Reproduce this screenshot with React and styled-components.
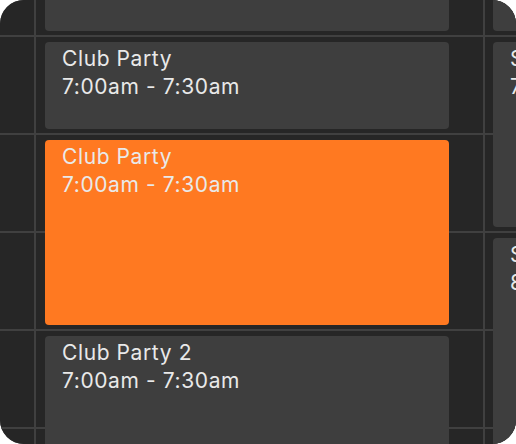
import React from 'react';
import styled, { createGlobalStyle } from 'styled-components';

const ROW = 98;
const LINE_Y = 35;

const GlobalStyle = createGlobalStyle`
  html, body {
    margin: 0;
    padding: 0;
    background: #ffffff;
  }
  body {
    font-family: Inter, "Noto Sans", sans-serif;
  }
`;

const Board = styled.div`
  width: 516px;
  height: 444px;
  border-radius: 24px;
  overflow: hidden;
  display: grid;
  grid-template-columns: 34px 447px 31px;
  column-gap: 2px;
  background: #404040;
`;

const Column = styled.div`
  position: relative;
  overflow: hidden;
  background-color: #262626;
  background-image: repeating-linear-gradient(
    to bottom,
    #404040 0,
    #404040 2px,
    transparent 2px,
    transparent ${ROW}px
  );
  background-position: 0 ${LINE_Y}px;
`;

// events sit on the time grid: top/height come from slot + span
const Event = styled.div`
  position: absolute;
  left: ${p => p.$left}px;
  width: ${p => p.$width ? `${p.$width}px` : 'auto'};
  right: ${p => p.$width ? 'auto' : '-20px'};
  top: ${p => LINE_Y + 2 + ROW * p.$slot + 5}px;
  height: ${p => ROW * p.$span - 11}px;
  box-sizing: border-box;
  padding: 3px 17px 0;
  border-radius: 4px;
  background: ${p => p.$active ? '#ff7921' : '#3e3e3e'};
  color: #e9e9e9;
  overflow: hidden;
  white-space: nowrap;
`;

const Line = styled.div`
  font-size: 21px;
  line-height: 28px;
  letter-spacing: 0.6px;
`;

const middle = [
  { slot: -1, span: 1 },
  { slot: 0, span: 1, title: 'Club Party', time: '7:00am - 7:30am' },
  { slot: 1, span: 2, title: 'Club Party', time: '7:00am - 7:30am', active: true },
  { slot: 3, span: 2, title: 'Club Party 2', time: '7:00am - 7:30am' },
];

const right = [
  { slot: -1, span: 1 },
  { slot: 0, span: 2, title: 'Soccer Practice', time: '7:00am - 8:00am' },
  { slot: 2, span: 3, title: 'Swim Class', time: '8:00am - 9:00am' },
];

const EventCard = ({ ev, left, width }) => (
  <Event $slot={ev.slot} $span={ev.span} $active={ev.active} $left={left} $width={width}>
    {ev.title && <Line>{ev.title}</Line>}
    {ev.time && <Line>{ev.time}</Line>}
  </Event>
);

export default function App() {
  return (
    <>
      <GlobalStyle />
      <Board>
        <Column />
        <Column>
          {middle.map((ev, i) => (
            <EventCard key={i} ev={ev} left={9} width={404} />
          ))}
        </Column>
        <Column>
          {right.map((ev, i) => (
            <EventCard key={i} ev={ev} left={8} />
          ))}
        </Column>
      </Board>
    </>
  );
}
